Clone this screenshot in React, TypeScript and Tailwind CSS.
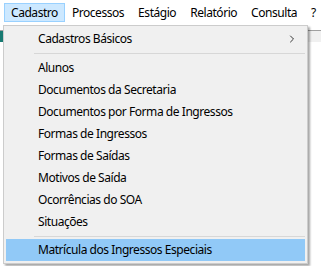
import { ChevronRight } from 'lucide-react';

const topMenus = ['Cadastro', 'Processos', 'Estágio', 'Relatório', 'Consulta', '?'];

const items = [
  'Alunos',
  'Documentos da Secretaria',
  'Documentos por Forma de Ingressos',
  'Formas de Ingressos',
  'Formas de Saídas',
  'Motivos de Saída',
  'Ocorrências do SOA',
  'Situações',
];

export default function App() {
  return (
    <div
      className="relative w-[321px] h-[266px] bg-white overflow-hidden text-[12px] tracking-[-0.45px] text-black"
      style={{ fontFamily: '"Noto Sans", "Open Sans", sans-serif' }}
    >
      {/* Menu bar */}
      <div className="h-[25px] flex items-center pl-[4px] bg-white">
        {topMenus.map((m, i) => (
          <div
            key={m}
            className={`h-[19px] flex items-center px-[6px] leading-none border ${
              i === 0 ? 'bg-[#cce8ff] border-[#99d1ff]' : 'border-transparent'
            }`}
          >
            {m}
          </div>
        ))}
      </div>

      {/* toolbar strip behind the dropdown */}
      <div className="mt-[5px] h-[12px] flex border-t border-[#a0a0a0] bg-[#f0f0f0]">
        <div className="w-[3px] h-full bg-[#187a72]" />
      </div>

      {/* Dropdown */}
      <div className="absolute left-[3px] top-[25px] w-[305px] bg-[#f0f0f0] border border-[#cccccc] shadow-[2px_2px_2px_rgba(0,0,0,0.35)] py-[2px] px-[1px]">
        <div className="h-[22px] flex items-center pl-[33px] pr-[8px] justify-between">
          <span>Cadastros Básicos</span>
          <ChevronRight size={12} strokeWidth={1.8} className="text-[#222]" />
        </div>
        <div className="h-[7px] flex items-center pl-[29px] pr-[1px]">
          <div className="w-full h-px bg-[#d7d7d7]" />
        </div>
        {items.map((it) => (
          <div key={it} className="h-[22px] flex items-center pl-[33px]">
            {it}
          </div>
        ))}
        <div className="h-[6px] flex items-center pl-[29px] pr-[1px]">
          <div className="w-full h-px bg-[#d7d7d7]" />
        </div>
        <div className="h-[22px] flex items-center pl-[32px] mx-px bg-[#91c9f7]">
          Matrícula dos Ingressos Especiais
        </div>
      </div>
    </div>
  );
}
